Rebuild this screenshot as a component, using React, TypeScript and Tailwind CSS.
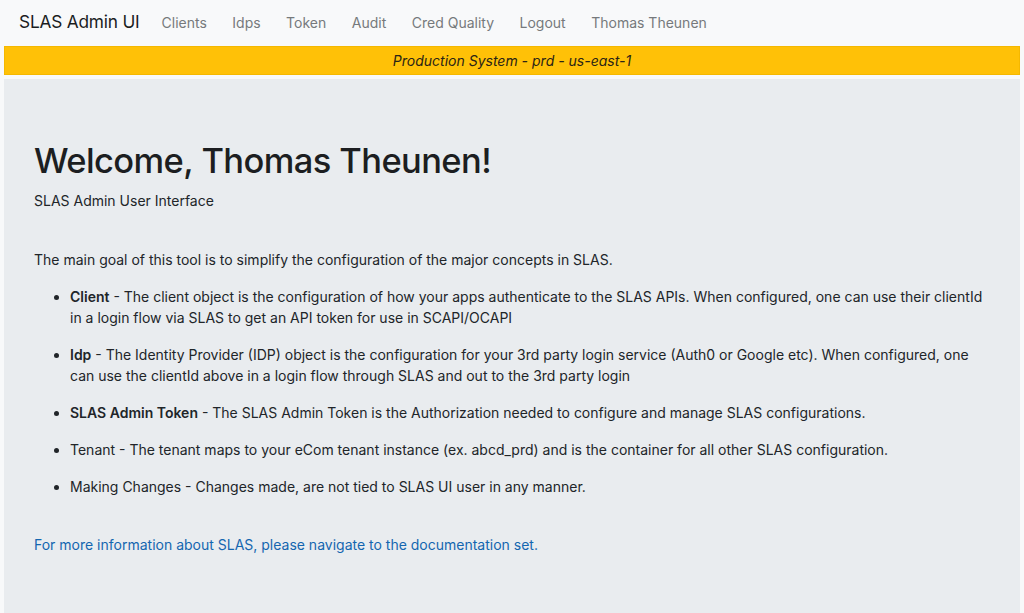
import React from 'react';

const links = ['Clients', 'Idps', 'Token', 'Audit', 'Cred Quality', 'Logout', 'Thomas Theunen'];

const items: { title: string; bold: boolean; text: string }[] = [
  {
    title: 'Client',
    bold: true,
    text: 'The client object is the configuration of how your apps authenticate to the SLAS APIs. When configured, one can use their clientId in a login flow via SLAS to get an API token for use in SCAPI/OCAPI',
  },
  {
    title: 'Idp',
    bold: true,
    text: 'The Identity Provider (IDP) object is the configuration for your 3rd party login service (Auth0 or Google etc). When configured, one can use the clientId above in a login flow through SLAS and out to the 3rd party login',
  },
  {
    title: 'SLAS Admin Token',
    bold: true,
    text: 'The SLAS Admin Token is the Authorization needed to configure and manage SLAS configurations.',
  },
  {
    title: 'Tenant',
    bold: false,
    text: 'The tenant maps to your eCom tenant instance (ex. abcd_prd) and is the container for all other SLAS configuration.',
  },
  {
    title: 'Making Changes',
    bold: false,
    text: 'Changes made, are not tied to SLAS UI user in any manner.',
  },
];

export default function App() {
  return (
    <div className="h-[613px] overflow-hidden bg-[#f8f9fa] font-['Inter',sans-serif] text-[#212529] flex flex-col">
      <nav className="h-[44px] shrink-0 flex items-center px-[19px]">
        <span className="text-[17.3px] text-[#1b1d1f] mr-[22px] tracking-[-0.2px]">SLAS Admin UI</span>
        <div className="flex items-center gap-[25.5px] text-[14px] text-[#76797c]">
          {links.map((l) => (
            <a key={l} href="#">
              {l}
            </a>
          ))}
        </div>
      </nav>

      <div className="mx-[4px] mt-[2px] h-[29px] shrink-0 bg-[#ffc107] border border-[#f5b800] flex items-center justify-center">
        <span className="italic text-[14px] text-[#2a2416]">Production System - prd - us-east-1</span>
      </div>

      <main className="flex-1 mx-[4px] mt-[4px] bg-[#e9ecef] px-[30px] pt-[60px]">
        <h1 className="text-[34.5px] font-medium leading-[44px] tracking-[-0.6px] text-[#1c1e21]">
          Welcome, Thomas Theunen!
        </h1>
        <p className="text-[14px] mt-[7px] leading-[21px]">SLAS Admin User Interface</p>

        <p className="text-[14px] mt-[38px] leading-[21px]">
          The main goal of this tool is to simplify the configuration of the major concepts in SLAS.
        </p>

        <ul className="mt-[16px] pl-[36px] list-disc text-[14px] leading-[21px] flex flex-col gap-[16px]">
          {items.map((it) => (
            <li key={it.title}>
              {it.bold ? <b className="font-semibold">{it.title}</b> : it.title} - {it.text}
            </li>
          ))}
        </ul>

        <a href="#" className="block mt-[37px] text-[14px] leading-[21px] text-[#1466b0]">
          For more information about SLAS, please navigate to the documentation set.
        </a>
      </main>
    </div>
  );
}
